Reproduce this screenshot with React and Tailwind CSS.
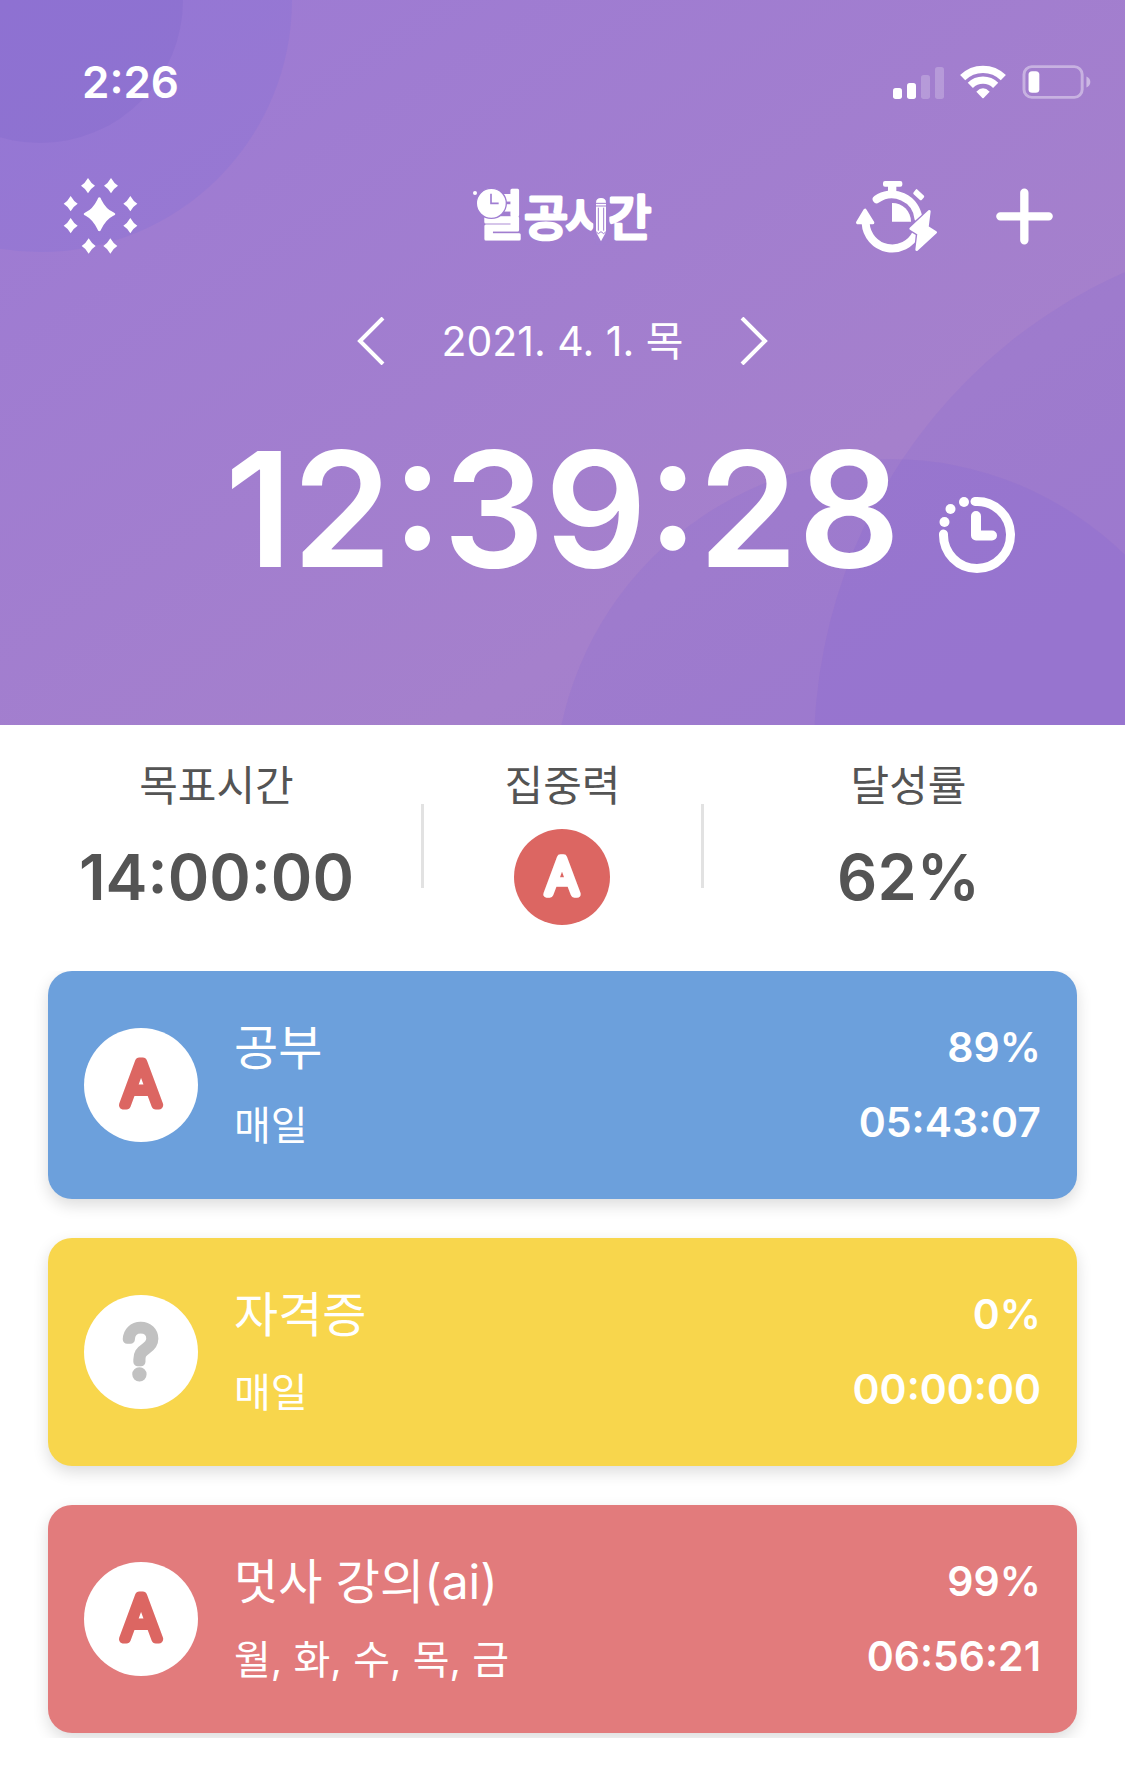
import React from 'react';
import clsx from 'clsx';

const subjects = [
  { id: 1, name: '공부', days: '매일', percent: '89%', time: '05:43:07', grade: 'A', color: 'bg-[#6ca0dc]' },
  { id: 2, name: '자격증', days: '매일', percent: '0%', time: '00:00:00', grade: '?', color: 'bg-[#f8d64c]' },
  { id: 3, name: '멋사 강의(ai)', days: '월, 화, 수, 목, 금', percent: '99%', time: '06:56:21', grade: 'A', color: 'bg-[#e27b7c]' },
];

const smallStars = [
  [264, 560], [333, 560], [212, 614], [391, 614],
  [212, 680], [391, 680], [266, 741], [331, 741],
];

const HeaderBackground = () => (
  <svg className="absolute inset-0 h-full w-full" viewBox="0 0 1125 725" preserveAspectRatio="none" aria-hidden="true">
    <circle cx="40" cy="0" r="252" fill="#6a68dc" fillOpacity="0.15" />
    <circle cx="40" cy="0" r="143" fill="#6a58c4" fillOpacity="0.15" />
    <circle cx="1337" cy="750" r="523" fill="#7a5fd8" fillOpacity="0.14" />
    <circle cx="890" cy="795" r="336" fill="#7a5fd8" fillOpacity="0.14" />
  </svg>
);

const StatusIcons = () => (
  <div className="flex items-center gap-4 text-white">
    <svg className="h-[33px] w-[51px]" viewBox="159 75 153 99" fill="currentColor" aria-hidden="true">
      <rect x="159" y="141" width="27" height="33" rx="8" />
      <rect x="201" y="126" width="27" height="48" rx="8" />
      <rect x="243" y="102" width="27" height="72" rx="8" opacity="0.22" />
      <rect x="285" y="78" width="27" height="96" rx="8" opacity="0.22" />
    </svg>
    <svg className="h-[34px] w-[46px]" viewBox="360 74 138 102" fill="none" stroke="currentColor" strokeWidth="22" aria-hidden="true">
      <path d="M368 112a87 87 0 0 1 122 0" />
      <path d="M391 135a54 54 0 0 1 76 0" />
      <path d="M409 154Q429 134 449 154L431 173Q429 175 427 173Z" fill="currentColor" stroke="none" />
    </svg>
    <svg className="h-[34px] w-[69px]" viewBox="546 74 207 104" fill="currentColor" aria-hidden="true">
      <rect x="550" y="79" width="178" height="94" rx="24" fill="none" stroke="currentColor" strokeWidth="9" opacity="0.4" />
      <rect x="564" y="93" width="33" height="66" rx="11" />
      <path d="M741 109Q753 114 753 126Q753 138 741 143Z" opacity="0.45" />
    </svg>
  </div>
);

const SparkleIcon = () => (
  <svg className="h-[78px] w-[77px]" viewBox="186 534 231 234" fill="currentColor" aria-hidden="true">
    <path d="M298 595Q302 595 304 602Q318 630 340 640Q346 643 346 645Q346 648 340 650Q318 661 304 690Q302 697 298 697Q294 697 292 690Q278 661 257 650Q251 648 251 645Q251 643 257 640Q278 630 292 602Q294 595 298 595Z" />
    {smallStars.map(([x, y]) => (
      <path key={`${x}-${y}`} transform={`translate(${x} ${y})`} d="M0-23Q9-7 21 0Q9 7 0 23Q-9 7-21 0Q-9-7 0-23Z" />
    ))}
  </svg>
);

const Logo = () => (
  <svg className="h-[58px] w-[182px] overflow-visible" viewBox="36 45 546 174" role="img" aria-label="열공시간">
    <g
      className="font-['Noto_Sans_CJK_KR',sans-serif] font-medium"
      fill="#fff"
      stroke="#fff"
      strokeWidth="9"
      strokeLinejoin="round"
    >
      <text x="44" y="189" fontSize="160">열</text>
      <text x="192" y="190" fontSize="144">공</text>
      <text x="316" y="188" fontSize="136">시</text>
      <text x="442" y="190" fontSize="144">간</text>
    </g>
    <circle cx="45" cy="63" r="6" fill="#fff" />
    <circle cx="94" cy="94" r="45" fill="#fff" stroke="#9f7dd2" strokeWidth="4" />
    <path d="M93 65V94H116" fill="none" stroke="#9f7dd2" strokeWidth="5" />
    {/* pencil */}
    <path d="M400 60H448V186L440 218H408L400 186Z" fill="#a17ed0" />
    <path d="M408 92Q408 78 423 78Q438 78 438 92V180L423 208L408 180Z" fill="#fff" />
    <path d="M408 94H438M408 102H438M415 107V176M431 107V176M408 179L415 185L423 179L431 185L438 179" fill="none" stroke="#a17ed0" strokeWidth="3" />
  </svg>
);

const QuickTimerIcon = () => (
  <svg className="h-[73px] w-[83px]" viewBox="42 420 249 219" fill="currentColor" aria-hidden="true">
    <path d="M107 478A80 80 0 0 1 232 534" fill="none" stroke="currentColor" strokeWidth="24" strokeLinecap="round" />
    <path d="M74 550A80 80 0 0 0 226 580" fill="none" stroke="currentColor" strokeWidth="24" />
    <path d="M72 511L50 548H95Z" stroke="currentColor" strokeWidth="10" strokeLinejoin="round" />
    <rect x="126" y="423" width="58" height="17" rx="6" />
    <rect x="141" y="432" width="25" height="26" />
    <path d="M228 448L249 467Q251 470 248 473L242 480Q239 482 236 479L218 463Q215 460 218 457L224 449Q226 446 228 448Z" />
    <path d="M153 489A56 56 0 0 1 210 545H153Z" />
    <path d="M265 514L207 566L232 581L227 629L284 577L259 561Z" stroke="#a17ed0" strokeWidth="15" strokeLinejoin="round" />
    <path d="M265 514L209 566L233 581L227 629L284 577L259 561Z" stroke="currentColor" strokeWidth="8" strokeLinejoin="round" />
  </svg>
);

const PlusIcon = () => (
  <svg className="h-[57px] w-[57px]" viewBox="468 445 171 171" stroke="currentColor" strokeWidth="25" strokeLinecap="round" aria-hidden="true">
    <path d="M553 459V602M481 530H626" />
  </svg>
);

const ElapsedIcon = () => (
  <svg className="h-[78px] w-[78px]" viewBox="0 0 78 78" fill="none" stroke="currentColor" strokeWidth="9" strokeLinecap="round" strokeLinejoin="round" aria-hidden="true">
    <path d="M37 5.5A33.5 33.5 0 1 1 5.5 38" />
    <path d="M38 20V39.500H54" strokeWidth="10" />
    <g fill="currentColor" stroke="none">
      <circle cx="6.500" cy="26" r="5" />
      <circle cx="12.500" cy="13" r="5" />
      <circle cx="26" cy="6" r="5" />
    </g>
  </svg>
);

const GradeBadge = ({ grade, filled }) => (
  <div className={clsx('shrink-0 rounded-full', filled ? 'h-24 w-24 bg-[#dc6662] text-white' : 'h-[114px] w-[114px] bg-white', !filled && (grade === '?' ? 'text-[#c1c1c1]' : 'text-[#dc6662]'))}>
    <svg className="h-full w-full font-['Inter',sans-serif] font-extralight" viewBox="0 0 114 114">
      <text
        x="57"
        y={grade === '?' ? 82 : 77}
        fontSize={grade === '?' ? 68 : 59}
        textAnchor="middle"
        fill="currentColor"
        stroke="currentColor"
        strokeWidth="9"
        strokeLinejoin="round"
      >
        {grade}
      </text>
    </svg>
  </div>
);

const Stat = ({ label, children }) => (
  <div className="flex flex-col items-center gap-3">
    <h2 className="text-[42px] leading-[60px]">{label}</h2>
    <div className="flex h-[98px] items-center text-[63px] font-semibold leading-none">{children}</div>
  </div>
);

const SubjectCard = ({ subject }) => (
  <li className={clsx('flex h-[228px] items-center rounded-3xl px-9 text-white shadow-[0_6px_16px_rgba(0,0,0,0.14)]', subject.color)}>
    <GradeBadge grade={subject.grade} />
    <div className="ml-9 flex-1 pt-1">
      <h3 className="text-[48px] leading-[78px]">{subject.name}</h3>
      <p className="text-[40px] leading-[78px]">{subject.days}</p>
    </div>
    <div className="text-right text-[41px] font-semibold leading-[75px]">
      <p>{subject.percent}</p>
      <p>{subject.time}</p>
    </div>
  </li>
);

const App = () => {
  return (
    <div className="min-h-screen bg-white font-['Inter','Noto_Sans_CJK_KR',sans-serif]">
      <header className="relative overflow-hidden bg-linear-to-br from-[#9c7ad4] via-[#a580cc] via-70% to-[#a27dce] text-white">
        <HeaderBackground />
        <div className="relative pb-[136px] pt-[58px]">
          {/* Status bar */}
          <div className="flex h-12 items-center justify-between pl-[82px] pr-[34px]">
            <span className="text-[44px] font-semibold leading-none">2:26</span>
            <StatusIcons />
          </div>

          {/* App bar */}
          <div className="mt-[70px] grid h-20 grid-cols-[1fr_auto_1fr] items-center px-[62px]">
            <button aria-label="테마" className="justify-self-start"><SparkleIcon /></button>
            <Logo />
            <div className="flex items-center gap-[58px] justify-self-end pr-2.5">
              <button aria-label="빠른 측정"><QuickTimerIcon /></button>
              <button aria-label="추가"><PlusIcon /></button>
            </div>
          </div>

          {/* Date */}
          <div className="mt-[60px] flex h-[50px] items-center justify-center gap-14">
            <button aria-label="이전 날짜">
              <svg className="h-12 w-7" viewBox="0 0 28 48" fill="none" stroke="currentColor" strokeWidth="4" aria-hidden="true">
                <path d="M26 1L3 24L26 47" />
              </svg>
            </button>
            <span className="text-[41px] leading-none">2021. 4. 1. 목</span>
            <button aria-label="다음 날짜">
              <svg className="h-12 w-7" viewBox="0 0 28 48" fill="none" stroke="currentColor" strokeWidth="4" aria-hidden="true">
                <path d="M2 1L25 24L2 47" />
              </svg>
            </button>
          </div>

          {/* Total time */}
          <div className="mt-[63px] grid grid-cols-[1fr_auto_1fr] items-center">
            <h1 className="col-start-2 text-[160px] font-semibold leading-none">12:39:28</h1>
            <button aria-label="기록" className="ml-[38px] mt-[52px] justify-self-start"><ElapsedIcon /></button>
          </div>
        </div>
      </header>

      <section className="grid grid-cols-[13fr_9fr_13fr] px-3 pb-[45px] pt-[31px] text-[#545454]">
        <Stat label="목표시간">14:00:00</Stat>
        <div className="relative">
          <Stat label="집중력"><GradeBadge grade="A" filled /></Stat>
          <span className="absolute left-0 top-12 h-[84px] w-[3px] bg-[#e2e2e2]" />
          <span className="absolute right-0 top-12 h-[84px] w-[3px] bg-[#e2e2e2]" />
        </div>
        <Stat label="달성률">62%</Stat>
      </section>

      <main className="overflow-hidden px-12 pb-[5px]">
        <ul className="flex flex-col gap-[39px]">
          {subjects.map(subject => (
            <SubjectCard key={subject.id} subject={subject} />
          ))}
        </ul>
      </main>
    </div>
  );
};

export default App;
